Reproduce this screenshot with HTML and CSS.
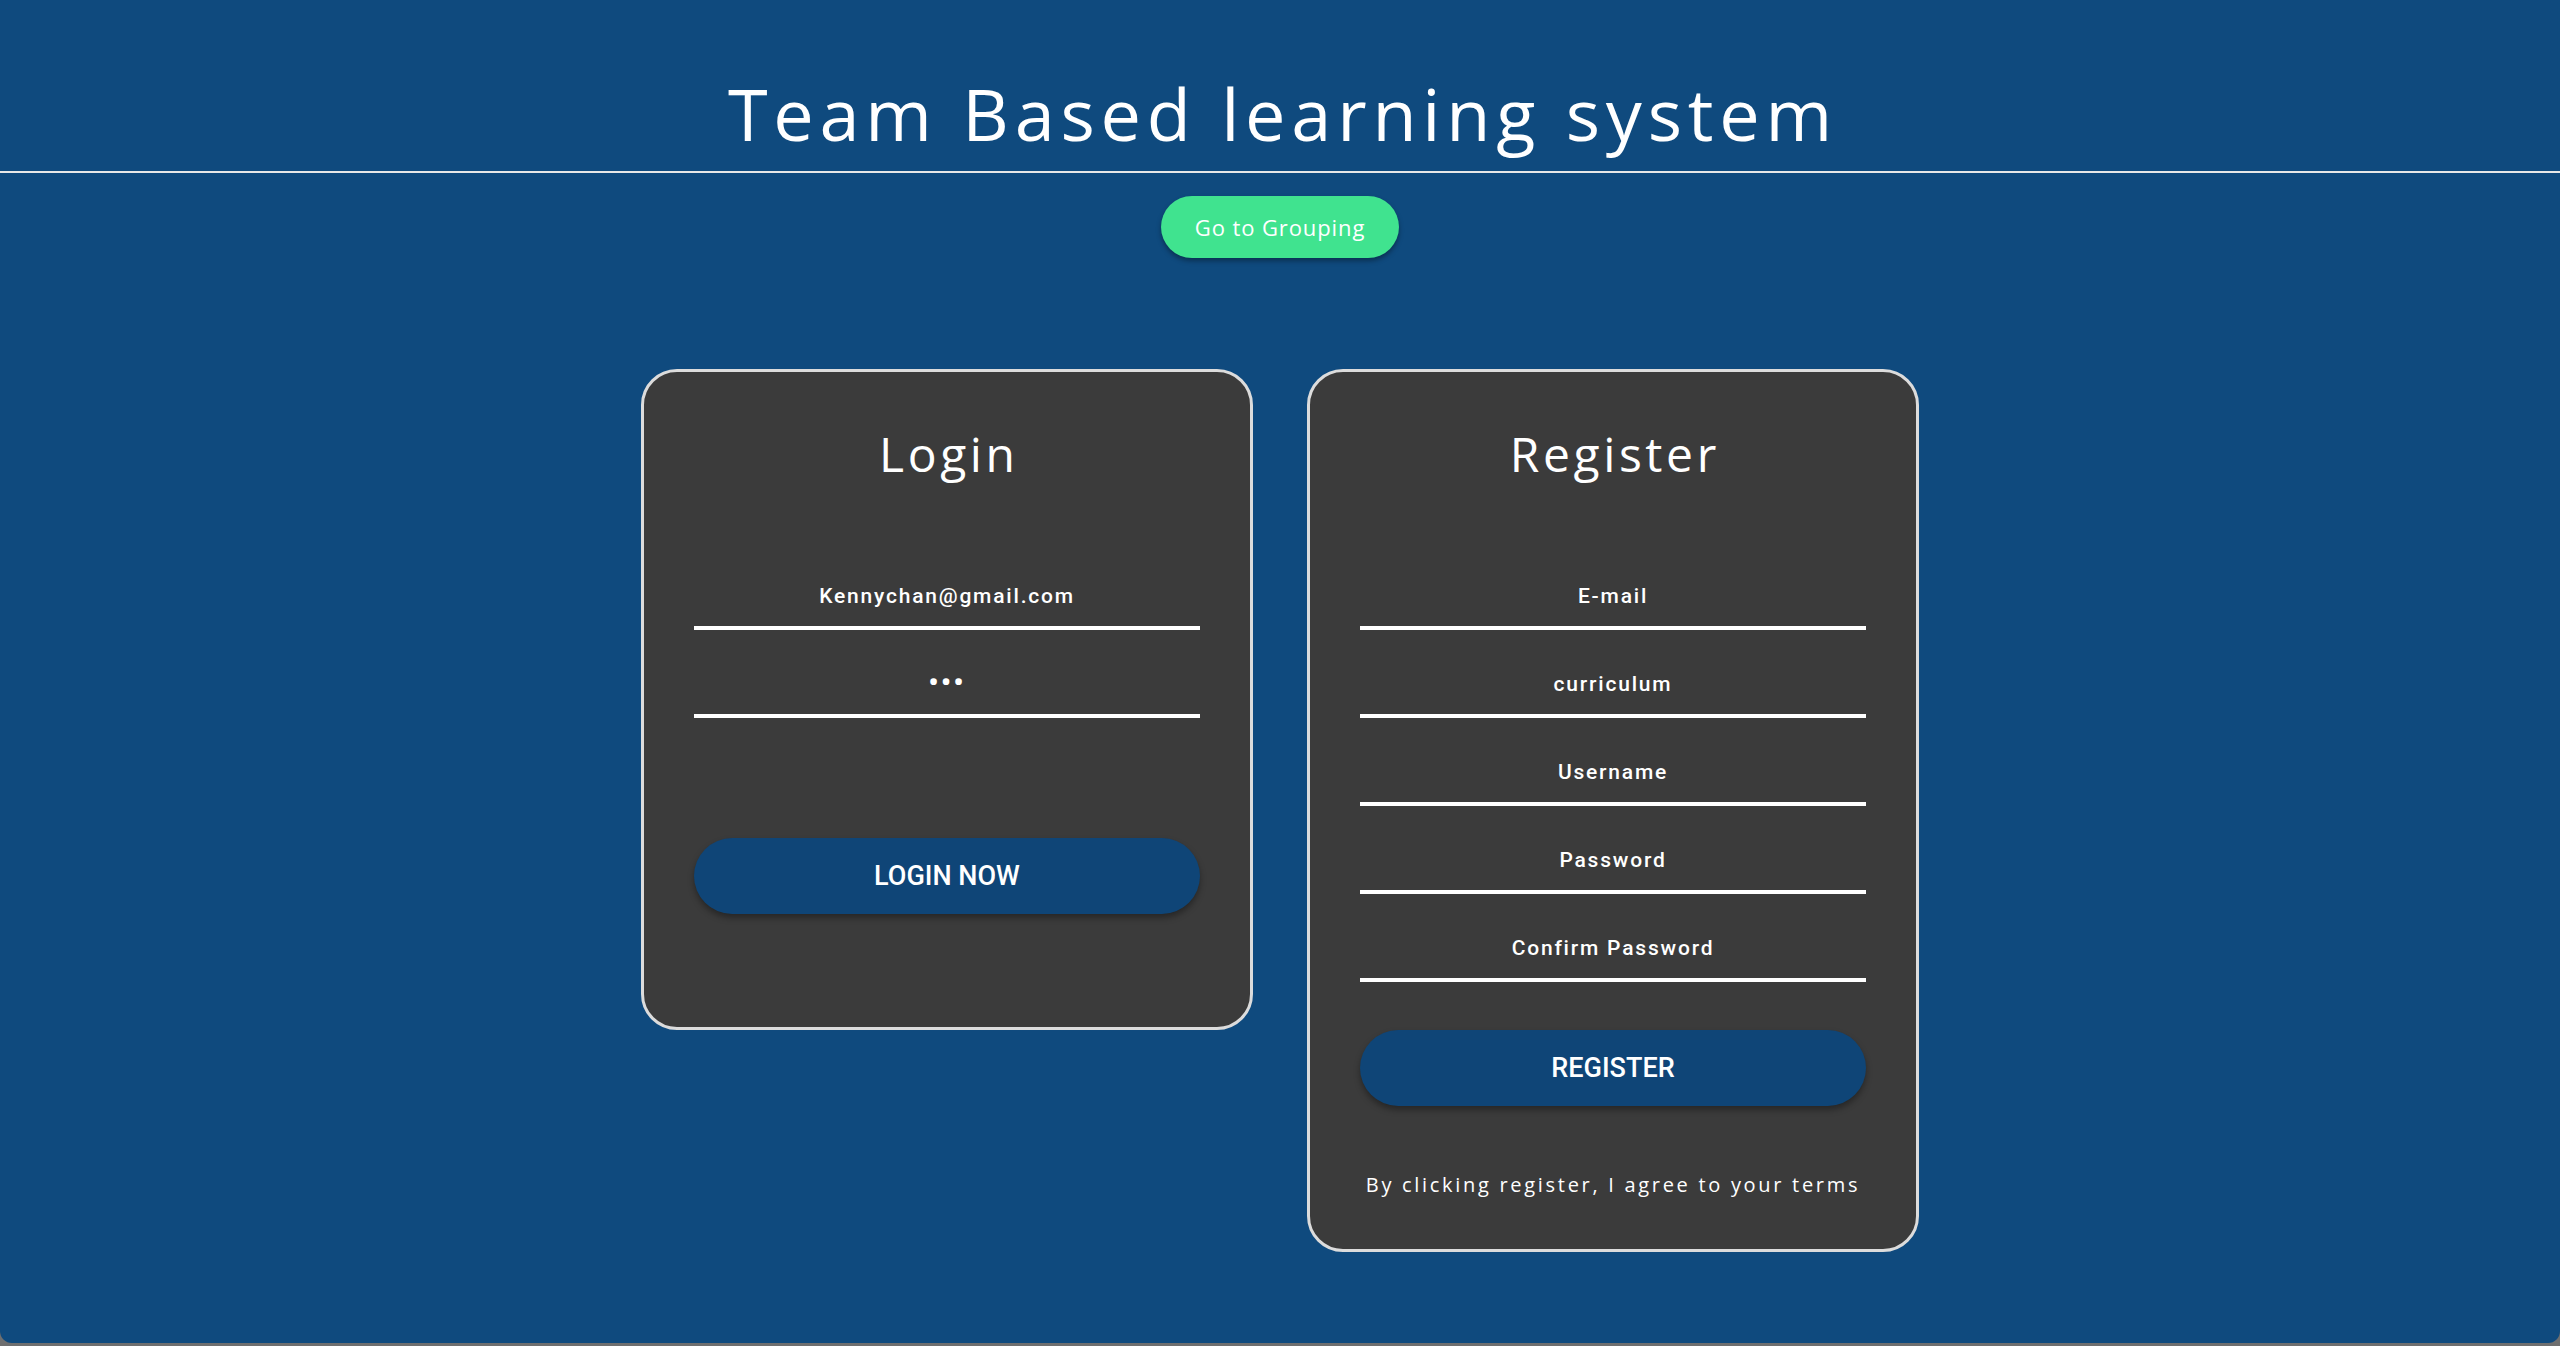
FILE: index.html
```html
<!DOCTYPE html>
<html lang="en">
<head>
<meta charset="utf-8">
<title>Team Based learning system</title>
<link rel="stylesheet" href="styles.css">
</head>
<body>
<div class="page">
  <header class="header">
    <h1 class="title">Team Based learning system</h1>
  </header>
  <div class="nav">
    <button class="group-btn" type="button">Go to Grouping</button>
  </div>
  <main class="cards">
    <section class="card">
      <h2 class="card-title">Login</h2>
      <input class="field" type="text" value="Kennychan@gmail.com">
      <input class="field secret" type="password" value="abc">
      <button class="action login-action" type="button">LOGIN NOW</button>
    </section>
    <section class="card">
      <h2 class="card-title">Register</h2>
      <input class="field" type="text" placeholder="E-mail">
      <input class="field" type="text" placeholder="curriculum">
      <input class="field" type="text" placeholder="Username">
      <input class="field" type="password" placeholder="Password">
      <input class="field" type="password" placeholder="Confirm Password">
      <button class="action register-action" type="button">REGISTER</button>
      <p class="terms">By clicking register, I agree to your terms</p>
    </section>
  </main>
</div>
</body>
</html>
```

FILE: styles.css
```css
html {
  background: #6f6f6f;
}
body {
  margin: 0;
  height: 1346px;
  overflow: hidden;
}
.page {
  height: 1343px;
  background: #0f4a7e;
  border-radius: 0 0 12px 12px;
  display: flex;
  flex-direction: column;
  align-items: stretch;
  font-family: "Open Sans", "DejaVu Sans", sans-serif;
  color: #ffffff;
}
.header {
  padding-top: 63px;
  padding-bottom: 8px;
  border-bottom: 2px solid #e8e8e8;
}
.title {
  margin: 0;
  text-align: center;
  font-size: 72px;
  line-height: 100px;
  font-weight: 400;
  letter-spacing: 5.8px;
  text-indent: 5.8px;
}
.nav {
  display: flex;
  justify-content: center;
  margin-top: 23px;
}
.group-btn {
  width: 238px;
  height: 62px;
  border: none;
  border-radius: 31px;
  background: #40e38f;
  color: #ffffff;
  font-family: "Open Sans", sans-serif;
  font-size: 22px;
  letter-spacing: 0.9px;
  box-shadow: 0 3px 5px rgba(0, 0, 0, 0.35);
  padding: 0;
}
.cards {
  display: flex;
  justify-content: center;
  align-items: flex-start;
  gap: 54px;
  margin-top: 111px;
}
.card {
  width: 612px;
  box-sizing: border-box;
  background: #3b3b3b;
  border: 3px solid #dcdcdc;
  border-radius: 36px;
  padding: 54px 50px 113px;
  display: flex;
  flex-direction: column;
}
.card:last-child {
  padding-bottom: 50px;
}
.card-title {
  margin: 0 0 60px;
  text-align: center;
  font-size: 48px;
  line-height: 56px;
  font-weight: 400;
  letter-spacing: 3.6px;
  text-indent: 3.6px;
}
.field {
  display: block;
  width: 100%;
  height: 88px;
  box-sizing: border-box;
  margin: 0;
  padding: 24px 0 0;
  border: none;
  border-bottom: 4px solid #ffffff;
  background: transparent;
  color: #ffffff;
  text-align: center;
  font-family: Roboto, "Liberation Sans", sans-serif;
  font-weight: 500;
  font-size: 21px;
  letter-spacing: 1.8px;
  outline: none;
}
.field::placeholder {
  color: #ffffff;
  opacity: 1;
}
.secret {
  font-size: 30px;
  letter-spacing: 2px;
  padding-top: 20px;
}
.action {
  height: 76px;
  width: 100%;
  border: none;
  border-radius: 38px;
  background: #0f4577;
  color: #ffffff;
  font-family: Roboto, "Liberation Sans", sans-serif;
  font-weight: 500;
  font-size: 27px;
  box-shadow: 0 4px 6px rgba(0, 0, 0, 0.35);
  padding: 0;
}
.login-action {
  margin-top: 120px;
}
.register-action {
  margin-top: 48px;
}
.terms {
  margin: 65px 0 0;
  text-align: center;
  font-size: 20px;
  line-height: 28px;
  letter-spacing: 2.7px;
}
```
